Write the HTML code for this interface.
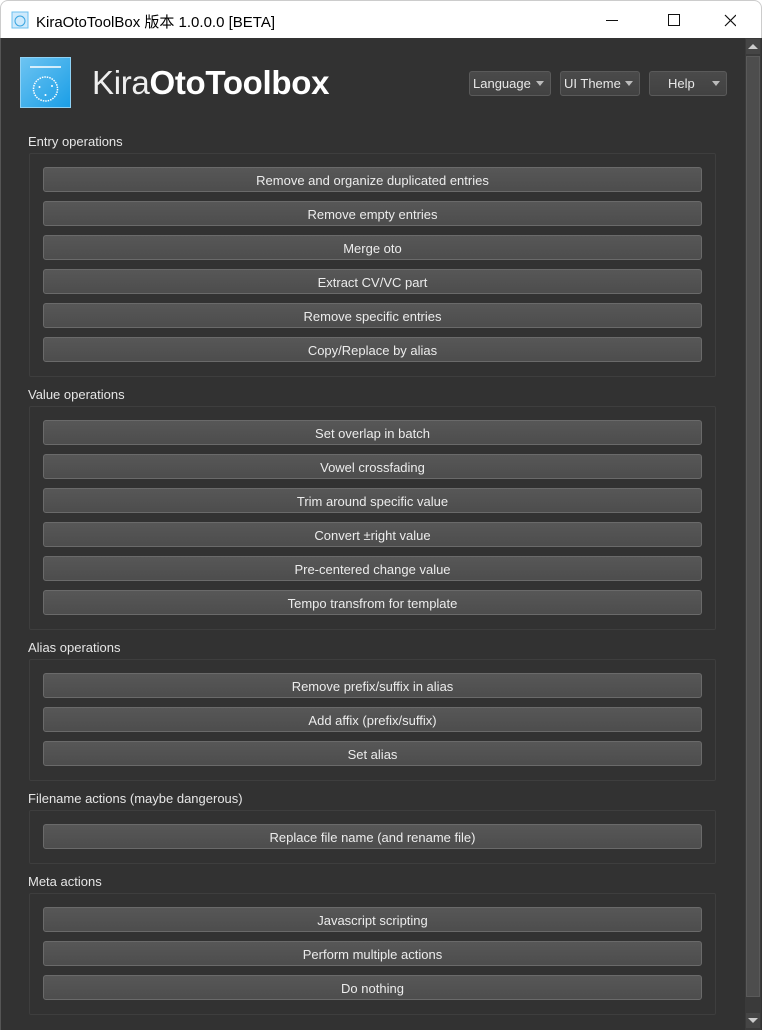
<!DOCTYPE html>
<html><head><meta charset="utf-8"><style>
*{box-sizing:border-box;margin:0;padding:0}
body{width:762px;height:1030px;overflow:hidden;background:#fff;font-family:"Liberation Sans","Noto Sans CJK SC",sans-serif;position:relative}
.title{position:absolute;left:0;top:0;width:762px;height:38px;background:#fff;border:1px solid #ccc;border-bottom:none;border-radius:8px 8px 0 0}
.title .t{position:absolute;left:35px;top:10px;font-size:15px;color:#000}
.main{position:absolute;left:0;top:38px;width:762px;height:992px;background:#323232;border-left:1px solid #555}
.sb{position:absolute;left:745px;top:38px;width:16px;height:992px;background:#3a3a3a}
.abs{position:absolute}
.lbl{position:absolute;left:28px;font-size:13px;color:#e6e6e6}
.grp{position:absolute;left:29px;width:687px;border:1px solid #3e3e3e;border-radius:2px}
.btn{position:absolute;left:43px;width:659px;height:25px;background:linear-gradient(#575757,#4d4d4d);border:1px solid #6a6a6a;border-radius:3px;color:#ececec;font-size:13px;text-align:center;line-height:25px}
.dd{position:absolute;top:71px;height:25px;background:linear-gradient(#4a4a4a,#424242);border:1px solid #5a5a5a;border-radius:3px;color:#e8e8e8;font-size:13px;line-height:24px;padding-left:3px}
.dd:after{content:"";position:absolute;right:6px;top:9px;border-left:4.5px solid transparent;border-right:4.5px solid transparent;border-top:5px solid #bbb}
</style></head><body>
<div class="title">
<svg class="abs" style="left:10px;top:10px" width="18" height="18"><rect x="1" y="1" width="16" height="16" fill="#cfeafc" stroke="#6cc0ef"/><circle cx="9" cy="10" r="5" fill="none" stroke="#3aa5e0"/></svg>
<div class="t">KiraOtoToolBox 版本 1.0.0.0 [BETA]</div>
<svg class="abs" style="left:605px;top:12px" width="130" height="16"><line x1="0" y1="7.5" x2="12" y2="7.5" stroke="#111"/><rect x="62.5" y="1.5" width="11" height="11" fill="none" stroke="#111"/><path d="M119 2L130 13M130 2L119 13" stroke="#111" stroke-width="1.2"/></svg>
</div>
<div class="main"></div>
<div class="sb">
<div class="abs" style="left:1px;top:1px;width:14px;height:15px;background:#454545"></div>
<div class="abs" style="left:3px;top:6px;border-left:5px solid transparent;border-right:5px solid transparent;border-bottom:5px solid #ccc"></div>
<div class="abs" style="left:1px;top:18px;width:14px;height:941px;background:#4d4d4d;border:1px solid #5a5a5a"></div>
<div class="abs" style="left:1px;top:975px;width:14px;height:15px;background:#454545"></div>
<div class="abs" style="left:3px;top:980px;border-left:5px solid transparent;border-right:5px solid transparent;border-top:5px solid #ccc"></div>
</div>
<svg class="abs" style="left:20px;top:57px" width="51" height="51"><defs><linearGradient id="g" x1="0" y1="0" x2="1" y2="1"><stop offset="0" stop-color="#6dc4f2"/><stop offset="1" stop-color="#1a9ee6"/></linearGradient></defs><rect x="0.5" y="0.5" width="50" height="50" fill="url(#g)" stroke="#8fd2f5"/><line x1="10" y1="10" x2="41" y2="10" stroke="#fff" stroke-width="1.5"/><circle cx="25.5" cy="32" r="12" fill="none" stroke="#fff" stroke-width="1.5" stroke-dasharray="1.5 1"/><circle cx="19.5" cy="30" r="1" fill="#fff"/><circle cx="32" cy="29" r="1" fill="#fff"/><circle cx="25.5" cy="38" r="1" fill="#fff"/></svg>
<div class="abs" style="left:92px;top:64px;font-size:33px;color:#fff;letter-spacing:-0.3px"><span style="font-weight:300;color:#eee">Kira</span><b>OtoToolbox</b></div>
<div class="dd" style="left:469px;width:82px">Language</div>
<div class="dd" style="left:560px;width:80px">UI Theme</div>
<div class="dd" style="left:649px;width:78px;padding-left:18px">Help</div>

<div class="lbl" style="top:134px">Entry operations</div>
<div class="grp" style="top:153px;height:224px"></div>
<div class="btn" style="top:167px">Remove and organize duplicated entries</div>
<div class="btn" style="top:201px">Remove empty entries</div>
<div class="btn" style="top:235px">Merge oto</div>
<div class="btn" style="top:269px">Extract CV/VC part</div>
<div class="btn" style="top:303px">Remove specific entries</div>
<div class="btn" style="top:337px">Copy/Replace by alias</div>

<div class="lbl" style="top:387px">Value operations</div>
<div class="grp" style="top:406px;height:224px"></div>
<div class="btn" style="top:420px">Set overlap in batch</div>
<div class="btn" style="top:454px">Vowel crossfading</div>
<div class="btn" style="top:488px">Trim around specific value</div>
<div class="btn" style="top:522px">Convert ±right value</div>
<div class="btn" style="top:556px">Pre-centered change value</div>
<div class="btn" style="top:590px">Tempo transfrom for template</div>

<div class="lbl" style="top:640px">Alias operations</div>
<div class="grp" style="top:659px;height:122px"></div>
<div class="btn" style="top:673px">Remove prefix/suffix in alias</div>
<div class="btn" style="top:707px">Add affix (prefix/suffix)</div>
<div class="btn" style="top:741px">Set alias</div>

<div class="lbl" style="top:791px">Filename actions (maybe dangerous)</div>
<div class="grp" style="top:810px;height:54px"></div>
<div class="btn" style="top:824px">Replace file name (and rename file)</div>

<div class="lbl" style="top:874px">Meta actions</div>
<div class="grp" style="top:893px;height:122px"></div>
<div class="btn" style="top:907px">Javascript scripting</div>
<div class="btn" style="top:941px">Perform multiple actions</div>
<div class="btn" style="top:975px">Do nothing</div>
</body></html>
